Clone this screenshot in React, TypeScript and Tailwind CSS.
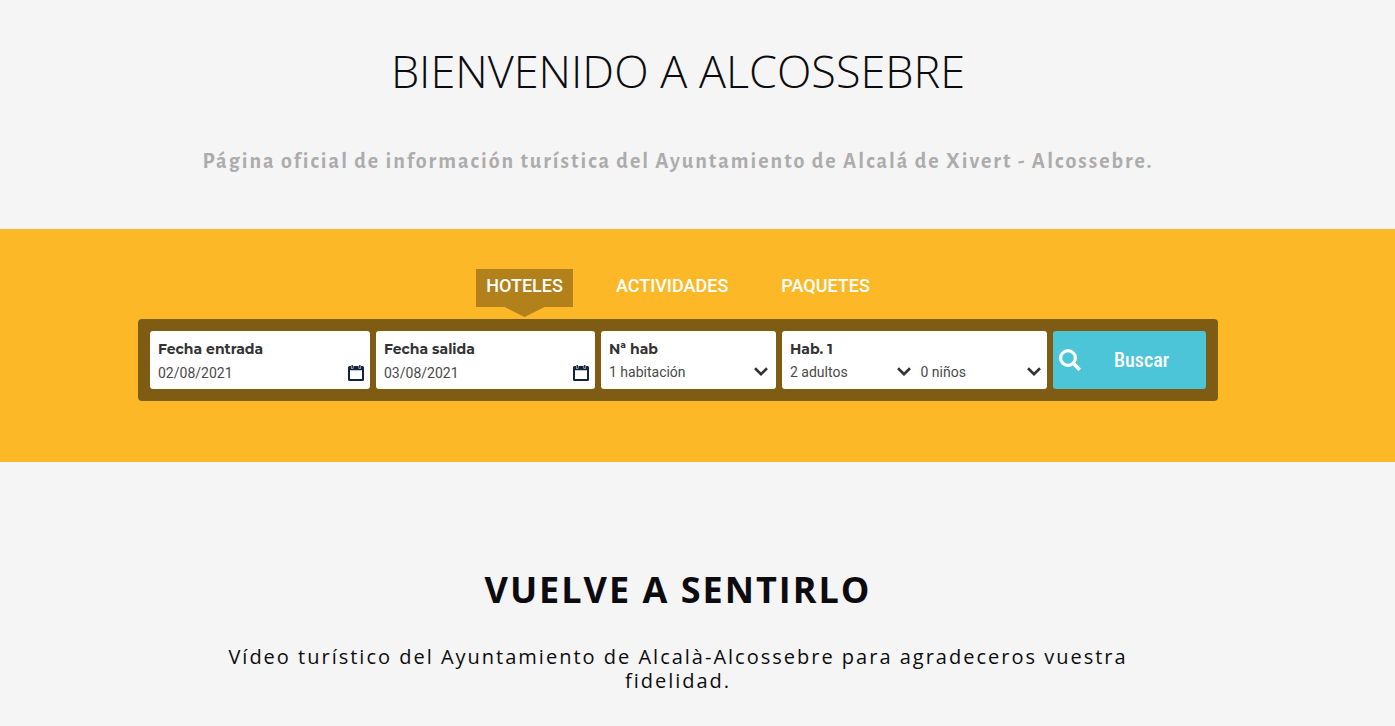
import { useState } from "react";
import type { ReactNode } from "react";
import clsx from "clsx";

const TABS = ["HOTELES", "ACTIVIDADES", "PAQUETES"];

const CalendarIcon = () => (
  <svg viewBox="0 0 16 16" className="h-4 w-4" fill="#14233d" aria-hidden="true">
    <path
      fillRule="evenodd"
      d="M1.500 1H3v2.400h2.400V1h5.200v2.400H13V1h1.500A1.500 1.500 0 0 1 16 2.500v12a1.500 1.500 0 0 1-1.500 1.500h-13A1.500 1.500 0 0 1 0 14.500v-12A1.500 1.500 0 0 1 1.500 1ZM2 5.200V14h12V5.200Z"
    />
    <path d="M3.500 0h1.400v3H3.500ZM11.100 0h1.400v3h-1.400Z" />
  </svg>
);

const ChevronIcon = () => (
  <svg
    viewBox="0 0 14 9"
    className="pointer-events-none absolute top-[5px] right-0 h-[9px] w-3.5"
    fill="none"
    stroke="#333"
    strokeWidth="2.6"
    aria-hidden="true"
  >
    <path d="M1 1.300 7 7.200l6-5.900" />
  </svg>
);

const SearchIcon = () => (
  <svg viewBox="0 0 22 22" className="h-[22px] w-[22px] shrink-0" fill="none" stroke="#fff" aria-hidden="true">
    <circle cx="9" cy="9" r="7.400" strokeWidth="3.200" />
    <path d="m14.300 14.300 6.500 6.500" strokeWidth="3.600" />
  </svg>
);

interface DateFieldProps {
  id: string;
  label: string;
  initial: string;
}

const DateField = ({ id, label, initial }: DateFieldProps) => {
  const [value, setValue] = useState(initial);
  return (
    <div className="min-w-0 rounded-[3px] bg-white pt-2 pr-1.5 pl-2">
      <FieldLabel htmlFor={id}>{label}</FieldLabel>
      <div className="flex h-6 items-center justify-between pt-1">
        <input
          id={id}
          type="text"
          value={value}
          onChange={(e) => setValue(e.target.value)}
          className="w-full min-w-0 text-sm leading-5 text-[#4a4a4a] outline-none"
        />
        <button type="button" aria-label={`Abrir calendario: ${label}`}>
          <CalendarIcon />
        </button>
      </div>
    </div>
  );
};

const FieldLabel = ({ htmlFor, children }: { htmlFor: string; children: ReactNode }) => (
  <label
    htmlFor={htmlFor}
    className="block font-[Montserrat,Inter,sans-serif] text-sm leading-5 font-bold"
  >
    {children}
  </label>
);

interface SelectFieldProps {
  id: string;
  options: string[];
  label?: string;
}

const SelectField = ({ id, options, label }: SelectFieldProps) => (
  <div className="relative min-w-0 flex-1">
    <select
      id={id}
      aria-label={label}
      className="block w-full appearance-none bg-transparent text-sm leading-5 text-[#4a4a4a] outline-none"
    >
      {options.map((option) => (
        <option key={option}>{option}</option>
      ))}
    </select>
    <ChevronIcon />
  </div>
);

const BookingForm = () => (
  <form
    onSubmit={(e) => e.preventDefault()}
    className="mx-auto grid max-w-[1080px] grid-cols-[220fr_219fr_175fr_265fr_153fr] gap-1.5 rounded bg-[#7f5c14] p-3 text-[#333]"
  >
    <DateField id="entrada" label="Fecha entrada" initial="02/08/2021" />
    <DateField id="salida" label="Fecha salida" initial="03/08/2021" />
    <div className="min-w-0 rounded-[3px] bg-white px-2 pt-2 pb-1">
      <FieldLabel htmlFor="habitaciones">Nª hab</FieldLabel>
      <div className="flex pt-[3px]">
        <SelectField id="habitaciones" options={["1 habitación", "2 habitaciones", "3 habitaciones"]} />
      </div>
    </div>
    <div className="min-w-0 rounded-[3px] bg-white pt-2 pr-1.5 pb-1 pl-2">
      <FieldLabel htmlFor="adultos">Hab. 1</FieldLabel>
      <div className="flex gap-2.5 pt-[3px]">
        <SelectField id="adultos" options={["2 adultos", "1 adulto", "3 adultos"]} />
        <SelectField id="ninos" label="Niños" options={["0 niños", "1 niño", "2 niños"]} />
      </div>
    </div>
    <button
      type="submit"
      className="flex h-[58px] items-center rounded-[3px] bg-[#4dc5d8] pr-1 pl-1.5 font-['Roboto_Condensed',Roboto,sans-serif] text-xl font-medium text-white"
    >
      <SearchIcon />
      <span className="flex-1 text-center">Buscar</span>
    </button>
  </form>
);

const BookingBanner = () => {
  const [active, setActive] = useState(TABS[0]);
  return (
    <section className="bg-[#fcb827] pt-10 pr-[39px] pb-[61px] font-[Roboto,sans-serif]">
      <div className="flex justify-center gap-[33px] pb-3">
        {TABS.map((tab) => (
          <button
            key={tab}
            type="button"
            onClick={() => setActive(tab)}
            className={clsx(
              "relative h-[38px] px-2.5 pb-1 text-lg leading-6 font-medium text-white",
              tab === active && "bg-[#b3811c]"
            )}
          >
            {tab}
            {tab === active && (
              <span className="absolute top-full left-1/2 h-2.5 w-10 -translate-x-1/2 bg-[#b3811c] [clip-path:polygon(0_0,100%_0,50%_100%)]" />
            )}
          </button>
        ))}
      </div>
      <BookingForm />
    </section>
  );
};

export default function App() {
  return (
    <main className="min-h-screen bg-[#f5f5f5] font-['Open_Sans',sans-serif] text-[#0c0c10]">
      <header className="pt-10 pr-[39px] pb-[54px] text-center">
        <h1 className="text-[45px] leading-[62px] font-light">BIENVENIDO A ALCOSSEBRE</h1>
        <p className="pt-[45px] font-['Alegreya_Sans',Lato,sans-serif] text-[22px] leading-7 font-bold tracking-[2px] text-[#acacac]">
          Página oficial de información turística del Ayuntamiento de Alcalá de Xivert - Alcossebre.
        </p>
      </header>
      <BookingBanner />
      <section className="pt-[104px] pr-[39px] pb-8 text-center">
        <h2 className="text-4xl leading-12 font-bold tracking-[2px]">VUELVE A SENTIRLO</h2>
        <p className="mx-auto max-w-[930px] pt-[31px] text-xl leading-6 tracking-[2px]">
          Vídeo turístico del Ayuntamiento de Alcalà-Alcossebre para agradeceros vuestra fidelidad.
        </p>
      </section>
    </main>
  );
}
